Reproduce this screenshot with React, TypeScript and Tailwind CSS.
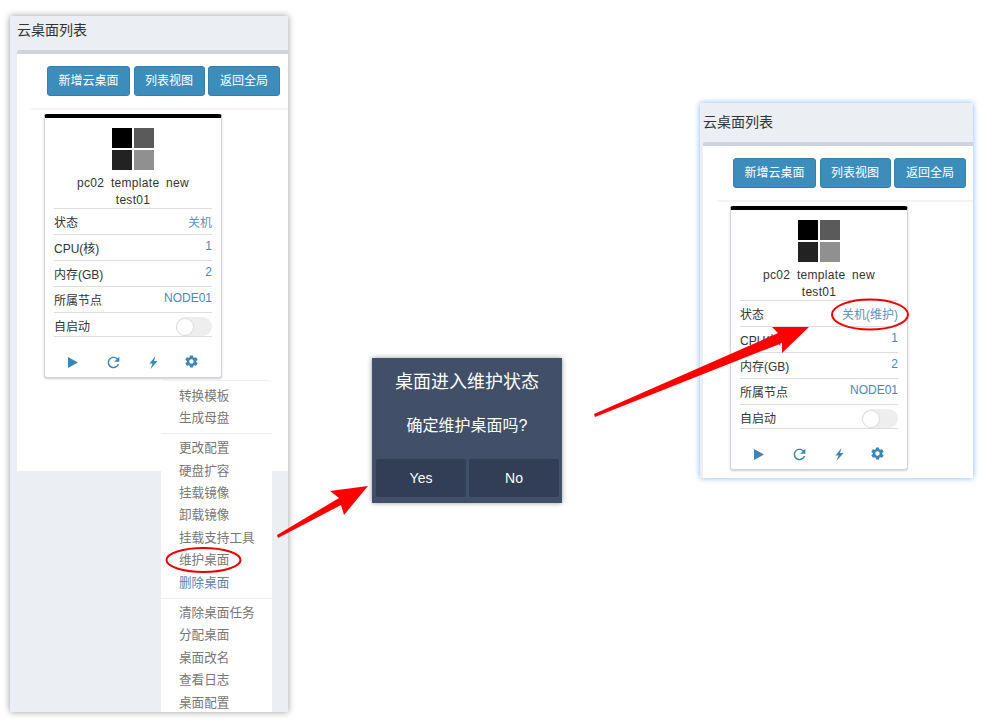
import { IoMdRefresh, IoMdSettings } from "react-icons/io";

const fontStack = "font-['Liberation_Sans','Noto_Sans_CJK_SC',sans-serif]";

const menuGroups = [
  ["转换模板", "生成母盘"],
  ["更改配置", "硬盘扩容", "挂载镜像", "卸载镜像", "挂载支持工具", "维护桌面", "删除桌面"],
  ["清除桌面任务", "分配桌面", "桌面改名", "查看日志", "桌面配置"],
];

function DesktopCard({ status }: { status: string }) {
  return (
    <div className="mt-1 ml-[13px] w-[178px] h-[264px] bg-white border border-[#d2d4dc] border-t-4 border-t-black rounded-[3px] shadow-[0_1px_2px_rgba(0,0,0,0.2)] px-[9px]">
      <div className="mt-[10px] mx-auto w-[42px] grid grid-cols-2 gap-[2px]">
        <div className="h-5 bg-black" />
        <div className="h-5 bg-[#5a5a5a]" />
        <div className="h-5 bg-[#222222]" />
        <div className="h-5 bg-[#909090]" />
      </div>
      <div className="mt-[5px] h-[33px] text-center text-[12px] leading-[17px] text-[#333] tracking-[0.3px] [word-spacing:3px]">
        pc02 template new
        <br />
        test01
      </div>
      <div className="text-[12px] text-[#333]">
        <div className="flex items-center justify-between h-[26px] pt-[2px] border-t border-[#dddddd]">
          <span>状态</span>
          <span className="text-[#5b93c0]">{status}</span>
        </div>
        <div className="flex items-center justify-between h-[26px] pt-[2px] border-t border-[#dddddd]">
          <span>CPU(核)</span>
          <span className="pb-[5px] text-[#4a88b8]">1</span>
        </div>
        <div className="flex items-center justify-between h-[26px] pt-[2px] border-t border-[#dddddd]">
          <span>内存(GB)</span>
          <span className="pb-[5px] text-[#4a88b8]">2</span>
        </div>
        <div className="flex items-center justify-between h-[26px] pt-[2px] border-t border-[#dddddd]">
          <span>所属节点</span>
          <span className="pb-[5px] text-[#4a88b8]">NODE01</span>
        </div>
        <div className="flex items-center justify-between h-[25px] pt-[4px] border-y border-[#dddddd]">
          <span>自启动</span>
          <span className="flex items-center w-9 h-[19px] rounded-full bg-[#eeeeee]">
            <span className="w-[18px] h-[18px] rounded-full bg-white border border-[#dddddd]" />
          </span>
        </div>
      </div>
      <div className="flex items-center mt-[16px] -ml-px h-[18px] text-[#3c85b8]">
        <span className="flex justify-center w-10">
          <svg width="10" height="11" viewBox="0 0 10 11" fill="currentColor">
            <polygon points="0,0 10,5.5 0,11" />
          </svg>
        </span>
        <span className="flex justify-center w-10">
          <IoMdRefresh size={17} />
        </span>
        <span className="flex justify-center w-10">
          <svg width="9" height="13" viewBox="0 0 9 13" fill="currentColor">
            <polygon points="6.5,0 0.5,7.5 3.5,7.5 1.5,13 8.5,5 5,5" />
          </svg>
        </span>
        <span className="flex justify-center w-[36px] -mt-[2px]">
          <IoMdSettings size={15} />
        </span>
      </div>
    </div>
  );
}

function DesktopList({ status, inset, panelHeight }: { status: string; inset: string; panelHeight: string }) {
  return (
    <>
      <div className={`h-[34px] flex items-start pt-[6px] text-[14px] leading-[16px] text-[#333] ${inset}`}>云桌面列表</div>
      <div className={`${inset === "pl-[7px]" ? "ml-[7px]" : "ml-[3px]"} ${panelHeight} w-[400px] bg-white border-t-4 border-[#d0d3dc] rounded-t-[3px] pt-3`}>
        <div className="flex gap-[3.5px] ml-[30px] text-[12px] text-white">
          <div className="flex items-center justify-center w-[83px] h-[30px] rounded-[3px] bg-[#3c8dbc] border border-[#367fa9]">新增云桌面</div>
          <div className="flex items-center justify-center w-[71px] h-[30px] rounded-[3px] bg-[#3c8dbc] border border-[#367fa9]">列表视图</div>
          <div className="flex items-center justify-center w-[72px] h-[30px] rounded-[3px] bg-[#3c8dbc] border border-[#367fa9]">返回全局</div>
        </div>
        <div className="ml-[14px]">
          <div className="mt-3 h-[2px] bg-[#f4f4f4]" />
          <DesktopCard status={status} />
        </div>
      </div>
    </>
  );
}

export default function App() {
  return (
    <div className={`relative w-[984px] h-[726px] overflow-hidden bg-white ${fontStack}`}>
      {/* left window with the open menu */}
      <div className="absolute left-[10px] top-4 w-[278px] h-[696px] overflow-hidden bg-[#ebeef3] shadow-[0_0_7px_rgba(0,0,0,0.4)]">
        <DesktopList status="关机" inset="pl-[7px]" panelHeight="h-[421px]" />
        <div className="absolute left-[151px] top-[364px] w-[111px] h-[340px] bg-white rounded-t-[3px] border-t border-[#f0f0f0] text-[12.6px] text-[#777]">
          {menuGroups.map((group, i) => (
            <div key={i} className={i > 0 ? "border-t border-[#eeeeee] mt-[3.5px] pt-[3.5px]" : "pt-[3.5px]"}>
              {group.map((item) => (
                <div key={item} className={`h-[22.4px] leading-[22px] pl-[18px] ${item === "删除桌面" ? "text-[#5f84ab]" : ""}`}>
                  {item}
                </div>
              ))}
            </div>
          ))}
        </div>
      </div>

      {/* confirm dialog */}
      <div className="absolute left-[372px] top-[358px] w-[190px] h-[145px] bg-[#414f69] shadow-[0_0_5px_rgba(0,0,0,0.4)] text-white text-center">
        <div className="mt-[13px] text-[18px] leading-[22px]">桌面进入维护状态</div>
        <div className="mt-[22px] text-[16px] leading-[22px]">确定维护桌面吗?</div>
        <div className="flex gap-[3px] ml-1 mt-[22px] text-[14px]">
          <div className="flex items-center justify-center w-[90px] h-[38px] rounded-[2px] bg-[#313e56]">Yes</div>
          <div className="flex items-center justify-center w-[90px] h-[38px] rounded-[2px] bg-[#313e56]">No</div>
        </div>
      </div>

      {/* right window after the change */}
      <div className="absolute left-[700px] top-[103px] w-[273px] h-[375px] overflow-hidden bg-[#ebeef3] pt-[5px] shadow-[0_0_6px_#80b4fa]">
        <DesktopList status="关机(维护)" inset="pl-[3px]" panelHeight="h-[340px]" />
      </div>

      {/* annotations */}
      <svg className="absolute inset-0" width="984" height="726" viewBox="0 0 984 726">
        <ellipse cx="203.5" cy="560" rx="37" ry="12" fill="none" stroke="#ee0000" strokeWidth="2" />
        <ellipse cx="870" cy="314.5" rx="38" ry="15" fill="none" stroke="#ee0000" strokeWidth="2" />
        <polygon points="277,535 339,498 330,491 368,486 344,515 341,505 278,538" fill="#ff0000" />
        <polygon points="594,414 778,333 772,327 809,327 782,353 782,343 595,417" fill="#ff0000" />
      </svg>
    </div>
  );
}
